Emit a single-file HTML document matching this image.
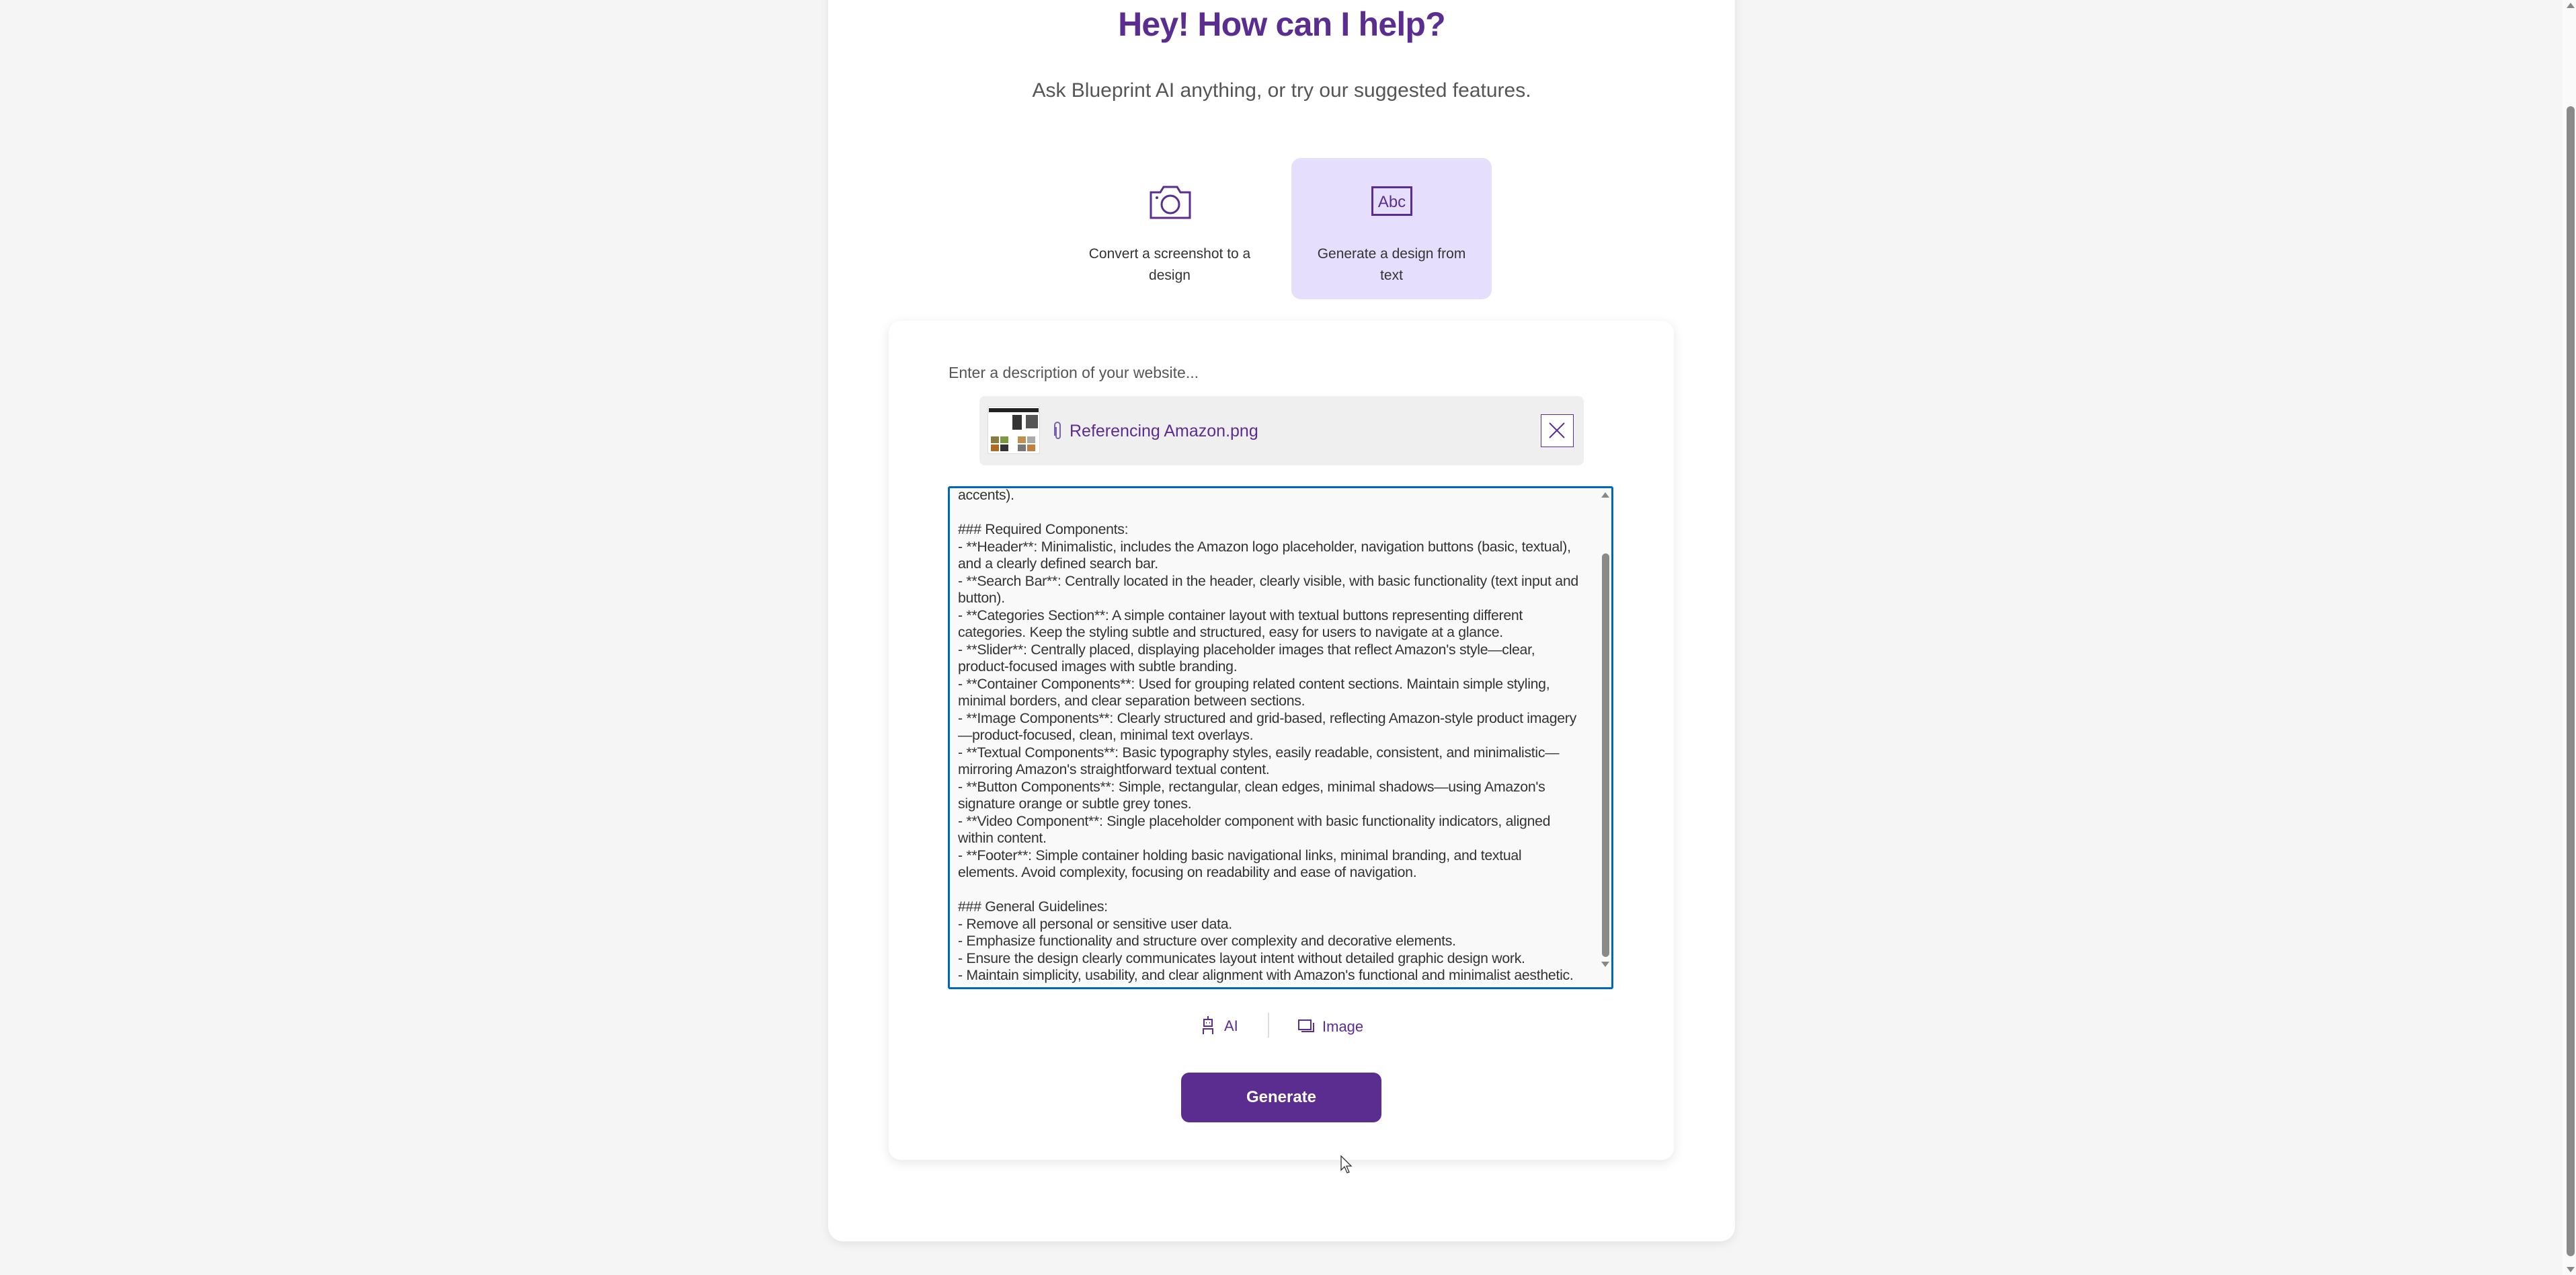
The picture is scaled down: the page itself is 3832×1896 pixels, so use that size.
<!DOCTYPE html>
<html><head><meta charset="utf-8">
<style>
*{margin:0;padding:0;box-sizing:border-box}
body{width:3832px;height:1896px;background:#f5f5f5;position:relative;overflow:hidden;font-family:"Liberation Sans",sans-serif}
.a{position:absolute}
#outer{left:1232px;top:-40px;width:1349px;height:1886px;background:#fff;border-radius:22px;box-shadow:0 4px 14px rgba(0,0,0,.08)}
#title{left:1232px;width:1349px;top:7px;text-align:center;font-size:50px;font-weight:bold;color:#5c2d91;letter-spacing:-0.8px}
#sub{left:1232px;width:1349px;top:118px;text-align:center;font-size:30px;color:#555}
.fc{width:298px;height:210px;top:235px;border-radius:14px}
.lbl{font-size:21px;color:#333;text-align:center;line-height:32px;width:298px;top:127px;left:0}
#inner{left:1322px;top:477px;width:1168px;height:1248px;background:#fff;border-radius:18px;box-shadow:0 4px 16px rgba(0,0,0,.1)}
#ph{left:1411px;top:541px;font-size:23px;color:#555}
#att{left:1457px;top:589px;width:899px;height:103px;background:#efefef;border-radius:8px}
#ta{left:1410px;top:723px;width:990px;height:748px;border:3px solid #0067c0;border-radius:3px;background:#f9f9f9;overflow:hidden}
#txt{position:absolute;left:12px;top:-2px;font-size:21.3px;line-height:25.5px;color:#333;white-space:pre;letter-spacing:-0.3px}
#gen{left:1757px;top:1595px;width:298px;height:74px;background:#5c2d91;border-radius:12px;color:#fff;font-weight:bold;font-size:24px;text-align:center;line-height:74px}
</style></head><body>
<div class="a" id="outer"></div>
<div class="a" id="title">Hey! How can I help?</div>
<div class="a" id="sub">Ask Blueprint AI anything, or try our suggested features.</div>

<div class="a fc" style="left:1591px">
 <svg class="a" style="left:118px;top:38px" width="64" height="54" viewBox="0 0 64 54"><path d="M3 13 H17 L22 5 H42 L47 13 H61 V51 H3 Z" fill="none" stroke="#5c2d91" stroke-width="3"/><circle cx="32" cy="31" r="13" fill="none" stroke="#5c2d91" stroke-width="3"/><circle cx="12" cy="21" r="2" fill="#5c2d91"/></svg>
 <div class="a lbl">Convert a screenshot to a<br>design</div>
</div>
<div class="a fc" style="left:1921px;background:#e6defd">
 <svg class="a" style="left:119px;top:42px" width="62" height="46" viewBox="0 0 62 46"><rect x="1.5" y="1.5" width="58" height="41" fill="none" stroke="#5c2d91" stroke-width="3"/><text x="30.5" y="31" text-anchor="middle" font-family="Liberation Sans" font-size="24" fill="#5c2d91">Abc</text></svg>
 <div class="a lbl">Generate a design from<br>text</div>
</div>

<div class="a" id="inner"></div>
<div class="a" id="ph">Enter a description of your website...</div>
<div class="a" id="att">
 <div class="a" style="left:12px;top:15px;width:78px;height:71px;background:#fff;border:1px solid #ddd">
  <div class="a" style="left:1px;top:2px;width:74px;height:6px;background:#222"></div>
  <div class="a" style="left:36px;top:12px;width:14px;height:22px;background:#333"></div>
  <div class="a" style="left:56px;top:12px;width:18px;height:20px;background:#555"></div>
  <div class="a" style="left:4px;top:44px;width:12px;height:10px;background:#8a7a40"></div>
  <div class="a" style="left:18px;top:44px;width:12px;height:10px;background:#7a9a40"></div>
  <div class="a" style="left:4px;top:56px;width:12px;height:10px;background:#b06a20"></div>
  <div class="a" style="left:18px;top:56px;width:12px;height:10px;background:#333"></div>
  <div class="a" style="left:44px;top:44px;width:12px;height:10px;background:#c09050"></div>
  <div class="a" style="left:58px;top:44px;width:12px;height:10px;background:#aaa"></div>
  <div class="a" style="left:44px;top:56px;width:12px;height:10px;background:#777"></div>
  <div class="a" style="left:58px;top:56px;width:12px;height:10px;background:#c08040"></div>
 </div>
 <svg class="a" style="left:110px;top:38px" width="14" height="28" viewBox="0 0 14 28"><path d="M4 8 V22 A3 3 0 0 0 10 22 V5 A4 4 0 0 0 2 5 V21" fill="none" stroke="#7b5fb0" stroke-width="2"/></svg>
 <div class="a" style="left:134px;top:38px;font-size:25px;color:#5c2d91">Referencing Amazon.png</div>
 <div class="a" style="left:835px;top:27px;width:49px;height:49px;border:1.5px solid #5c2d91;background:#fff">
  <svg width="46" height="46" viewBox="0 0 46 46"><path d="M12 12 L34 34 M34 12 L12 34" stroke="#5c2d91" stroke-width="2"/></svg>
 </div>
</div>

<div class="a" id="ta"><div id="txt">accents).

### Required Components:
- **Header**: Minimalistic, includes the Amazon logo placeholder, navigation buttons (basic, textual),
and a clearly defined search bar.
- **Search Bar**: Centrally located in the header, clearly visible, with basic functionality (text input and
button).
- **Categories Section**: A simple container layout with textual buttons representing different
categories. Keep the styling subtle and structured, easy for users to navigate at a glance.
- **Slider**: Centrally placed, displaying placeholder images that reflect Amazon's style—clear,
product-focused images with subtle branding.
- **Container Components**: Used for grouping related content sections. Maintain simple styling,
minimal borders, and clear separation between sections.
- **Image Components**: Clearly structured and grid-based, reflecting Amazon-style product imagery
—product-focused, clean, minimal text overlays.
- **Textual Components**: Basic typography styles, easily readable, consistent, and minimalistic—
mirroring Amazon's straightforward textual content.
- **Button Components**: Simple, rectangular, clean edges, minimal shadows—using Amazon's
signature orange or subtle grey tones.
- **Video Component**: Single placeholder component with basic functionality indicators, aligned
within content.
- **Footer**: Simple container holding basic navigational links, minimal branding, and textual
elements. Avoid complexity, focusing on readability and ease of navigation.

### General Guidelines:
- Remove all personal or sensitive user data.
- Emphasize functionality and structure over complexity and decorative elements.
- Ensure the design clearly communicates layout intent without detailed graphic design work.
- Maintain simplicity, usability, and clear alignment with Amazon's functional and minimalist aesthetic.</div>
 <div class="a" style="right:0;top:0;width:18px;height:100%;background:#f9f9f9"></div>
 <svg class="a" style="right:2px;top:4px" width="14" height="12"><path d="M7 2 L13 10 H1 Z" fill="#888"/></svg>
 <div class="a" style="right:3px;top:97px;width:11px;height:600px;background:#8a8a8a;border-radius:6px"></div>
 <svg class="a" style="right:2px;top:702px" width="14" height="12"><path d="M7 10 L13 2 H1 Z" fill="#888"/></svg>
</div>

<svg class="a" style="left:1786px;top:1510px" width="22" height="30" viewBox="0 0 22 30"><path d="M11 1 V6 M5 6 H17 V16 H5 Z M8 11 h1 M13 11 h1 M4 28 V20 H18 V28" fill="none" stroke="#5c2d91" stroke-width="2"/></svg>
<div class="a" style="left:1821px;top:1513px;font-size:22px;color:#5c2d91">AI</div>
<div class="a" style="left:1886px;top:1506px;width:2px;height:37px;background:#ddd"></div>
<svg class="a" style="left:1931px;top:1516px" width="24" height="20" viewBox="0 0 24 20"><rect x="1" y="1" width="18" height="14" fill="none" stroke="#5c2d91" stroke-width="2"/><path d="M5 18 H23 V5" fill="none" stroke="#5c2d91" stroke-width="2"/></svg>
<div class="a" style="left:1967px;top:1514px;font-size:22px;color:#5c2d91">Image</div>

<div class="a" id="gen">Generate</div>

<svg class="a" style="left:1994px;top:1718px" width="18" height="28" viewBox="0 0 18 28"><path d="M1 1 V22 L6 17 L10 26 L13 25 L9 16 L16 16 Z" fill="#fff" stroke="#333" stroke-width="1.3"/></svg>

<div class="a" style="left:3812px;top:0;width:20px;height:1896px;background:#fafafa"></div>
<svg class="a" style="left:3816px;top:2px" width="16" height="12"><path d="M8 2 L14 10 H2 Z" fill="#888"/></svg>
<div class="a" style="left:3818px;top:158px;width:12px;height:1710px;background:#8a8a8a;border-radius:6px"></div>
<svg class="a" style="left:3816px;top:1882px" width="16" height="12"><path d="M8 10 L14 2 H2 Z" fill="#888"/></svg>
</body></html>
